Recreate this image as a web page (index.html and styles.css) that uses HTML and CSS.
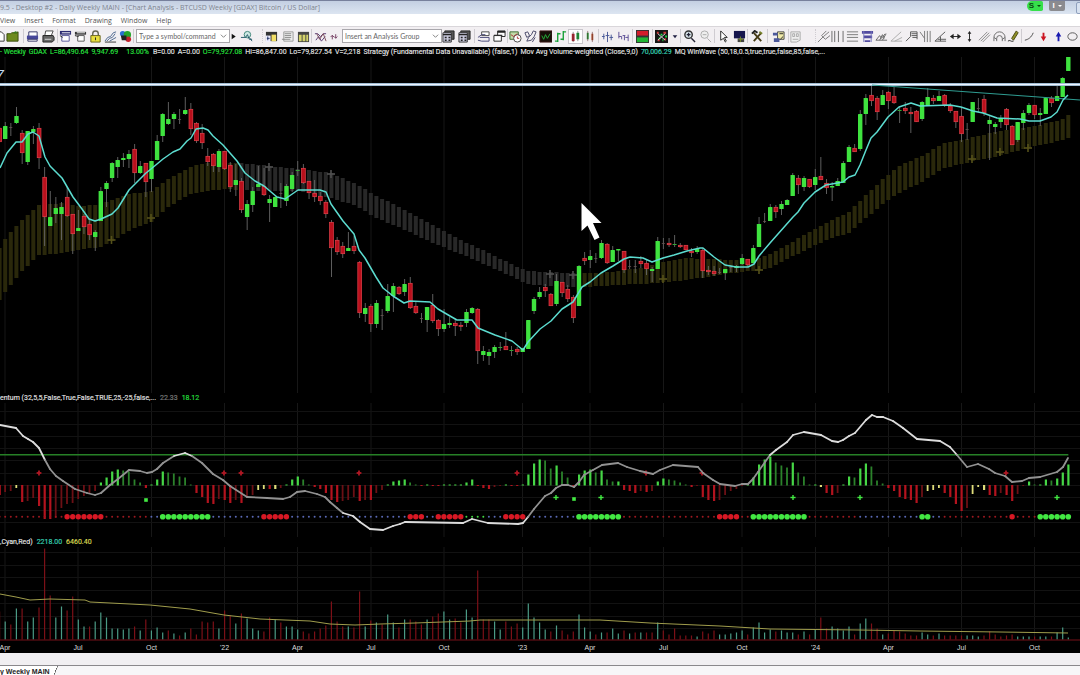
FILE: index.html
```html
<!DOCTYPE html>
<html lang="en">
<head>
<meta charset="utf-8">
<title>Desktop #2 - Daily Weekly MAIN</title>
<link rel="stylesheet" href="styles.css">
</head>
<body>
<div class="app">
  <header class="titlebar">
    <h1 class="title">9.5 - Desktop #2 - Daily Weekly MAIN - [Chart Analysis - BTCUSD Weekly [GDAX] Bitcoin / US Dollar]</h1>
    <div class="links">
      <button class="link link-symbol">S <i class="caret"></i></button>
      <button class="link link-interval">I <i class="caret"></i></button>
      <button class="link-edge" aria-label="Minimize"></button>
    </div>
  </header>
  <nav class="menu">
    <a href="#view">View</a><a href="#insert">Insert</a><a href="#format">Format</a><a href="#drawing">Drawing</a><a href="#window">Window</a><a href="#help">Help</a>
  </nav>
  <div class="toolbar" role="toolbar">
    <div class="group first" data-icons="doc folder"></div>
    <div class="group" data-icons="save print"></div>
    <div class="group" data-icons="win win2 lock wave colors"></div>
    <div class="group command">
      <input class="box" type="text" placeholder="Type a symbol/command" aria-label="Symbol or command">
      <svg class="drop" viewBox="0 0 8 8"><path d="M1 2.500l3 3 3-3" fill="none" stroke="#777"/></svg>
      <span class="icons" data-icons="play lookup"></span>
    </div>
    <div class="group dotted" data-icons="panel list book"></div>
    <div class="group analysis">
      <span class="icons" data-icons="zig updown"></span>
      <select class="box" aria-label="Analysis group"><option>Insert an Analysis Group</option></select>
      <svg class="drop" viewBox="0 0 8 8"><path d="M1 2.500l3 3 3-3" fill="none" stroke="#777"/></svg>
      <span class="icons" data-icons="tile tile"></span>
    </div>
    <div class="group" data-icons="hand stack"></div>
    <div class="group" data-icons="clock curve night ohlc candle candle2"></div>
    <div class="group" data-icons="bar1 bar2"></div>
    <div class="group" data-icons="redgreen"></div>
    <div class="group" data-icons="matrix small"></div>
    <div class="group" data-icons="zoomin zoomout"></div>
    <div class="group" data-icons="pointer screen"></div>
    <div class="group" data-icons="tools"></div>
    <div class="group" data-icons="flow"></div>
    <div class="group ghosted" data-icons="ghost"></div>
    <div class="group dotted" data-icons="fork vlines hlines fib fan angle steps vfan angle2 harrow varrow par arc pencil"></div>
    <div class="group" data-icons="curveline down up ellipse"></div>
  </div>
  <main class="charts">
    <p class="legend tight"><span class="g">- Weekly</span><span class="g">GDAX</span><span class="g">L=86,490.64</span><span class="g">9,947.69</span><span class="g change">13.00%</span><span>B=0.00</span><span>A=0.00</span><span class="g">O=79,927.08</span><span>Hi=86,847.00</span><span>Lo=79,827.54</span><span>V=2,218</span><span>Strategy (Fundamental Data Unavailable) (false,1)</span><span>Mov Avg Volume-weighted (Close,9,0)</span><span class="t">70,006.29</span><span>MQ WinWave (50,18,0.5,true,true,false,85,false,...</span></p>
    <svg id="price" class="plot" viewBox="0 57 1080 336" role="img" aria-label="Weekly price"></svg>
    <p class="legend"><span>entum (32,5,5,False,True,False,TRUE,25,-25,false,...</span><span class="dim">22.33</span><span class="g">18.12</span></p>
    <svg id="momentum" class="plot" viewBox="0 403 1080 134" role="img" aria-label="Momentum"></svg>
    <p class="legend"><span>,Cyan,Red)</span><span class="t">2218.00</span><span class="y">6460.40</span></p>
    <svg id="volume" class="plot" viewBox="0 547 1080 106" role="img" aria-label="Volume"></svg>
  </main>
  <footer class="tabs">
    <button class="tab">y Weekly MAIN</button>
  </footer>
</div>
<script src="chart.js"></script>
</body>
</html>
```
FILE: styles.css
```css
* { box-sizing: border-box; }
body { margin: 0; background: #f1eff2; font-family: "Open Sans", "Noto Sans", sans-serif; }
.app { min-height: 100vh; display: flex; flex-direction: column; overflow: hidden; }
button { border: 0; padding: 0; background: none; font: inherit; }

.titlebar { height: 14px; flex: none; display: flex; justify-content: space-between; border-top: 1px solid #77809c; background: linear-gradient(#c3cfe2, #dce5f1); }
.title { margin: 0; font: 400 7px/13px "Open Sans", "Noto Sans", sans-serif; color: #7d838e; white-space: nowrap; }
.links { display: flex; gap: 6px; align-items: flex-start; }
.link { width: 16px; height: 10px; display: flex; align-items: center; justify-content: center; gap: 3px; font: bold 8px/10px "Liberation Sans", sans-serif; border-radius: 0 0 2px 2px; }
.link-symbol { background: #36e04a; color: #0b4a12; border-radius: 6px 2px 2px 6px; }
.link-interval { background: #8b8b8f; color: #fff; }
.link-edge { width: 10px; height: 12px; margin: 1px -6px 0 5px; border: 1px solid #8fa0bd; border-radius: 2px; background: #d8e2f0; }
.caret { border: 2px solid transparent; border-top-color: currentColor; border-bottom: 0; }

.menu { height: 12px; flex: none; display: flex; gap: 9px; background: #fff; }
.menu a { font-size: 7px; line-height: 13px; color: #555; text-decoration: none; }

.toolbar { height: 21px; flex: none; display: grid; grid-template-columns: 23fr 34fr 76fr 129fr 49fr 163fr 33fr 91fr 34fr 20fr 28fr 34fr 33fr 20fr 21fr 27fr 206fr 59fr; background: #f2eff2; border-top: 1px solid #d9d6da; overflow: hidden; }
.group { min-width: 0; display: flex; align-items: center; justify-content: space-around; border-left: 1px solid #cfccd1; height: 14px; margin-top: 2px; }
.first { border-left: 0; justify-content: flex-end; padding-right: 4px; }
.dotted { border-left-style: dotted; }
.ghosted { justify-content: flex-start; }
.icons { display: flex; gap: 2px; flex: none; }
.tool { width: 13px; height: 13px; flex: none; display: block; }
.tool svg { display: block; width: 13px; height: 13px; }
.tool.on { background: #fff; outline: 1px solid #c9c6cc; }
.tool.tiny { width: 8px; }
.tool.tiny svg { width: 8px; }
.box { flex: 1 1 0; min-width: 0; height: 14px; border: 1px solid #a9a7ac; background: #fff; font: 7px/12px Lato, "Open Sans", sans-serif; color: #666; padding: 0 2px; border-radius: 0; appearance: none; }
.box::placeholder { color: #666; opacity: 1; }
.drop { width: 7px; height: 8px; flex: none; margin: 0 3px 0 -10px; }
.command { padding: 0 9px 0 2px; }
.analysis { padding: 0 3px 0 2px; }
.analysis .icons { gap: 3px; }
.analysis .box { margin-left: 4px; }
.command .icons { gap: 2px; }

.charts { background: #000; }
.legend { margin: 0; height: 10px; display: flex; gap: 4px; font: 7px/10px Roboto, "Liberation Sans", sans-serif; color: #ddd; white-space: nowrap; overflow: hidden; -webkit-text-stroke: 0.2px currentColor; }
.tight { gap: 3px; }
.change { margin: 0 1px 0 5px; }
.g { color: #24d93a; }
.t { color: #35c9ac; }
.y { color: #d0d04e; }
.dim { color: #777; }
.plot { display: block; width: 100%; height: auto; }
.plot text { font: 7px "Liberation Sans", Arial, sans-serif; fill: #ddd; text-anchor: middle; }
.plot .note { font: italic 14px "Liberation Sans", Arial, sans-serif; fill: #c4daf2; }

.tabs { flex: 1; min-height: 22px; padding-top: 13px; background: linear-gradient(#f1eff2 12px, #8a888c 12px, #8a888c 13px, #f7f6f8 13px); }
.tab { display: block; width: 58px; height: 10px; background: #fff linear-gradient(112deg, transparent 53px, #555 53px, #555 54px, transparent 54px); clip-path: polygon(0 0, 58px 0, 54px 100%, 0 100%); text-align: left; font: bold 7px/9px "Liberation Sans", Arial, sans-serif; color: #222; white-space: nowrap; }
```
FILE: chart.js
```js
const ICONS = {
  doc: '<path d="M3 2h6l3 3v7H3z" fill="#fff" stroke="#333"/>',
  folder: '<path d="M1 4h4l1-1h5l2-1v10H1z" fill="#6d8a1d" stroke="#384a0c"/><path d="M7 3l4-2 1 3z" fill="#3c7a1c"/>',
  save: '<path d="M3 2h9v5H3z" fill="#fff" stroke="#336"/><path d="M1 6h12v4H1z" fill="#47479a"/><path d="M2 10h10v2H2z" fill="#fff" stroke="#336"/>',
  print: '<path d="M4 1h8l-2 5H3z" fill="#fff" stroke="#444"/><path d="M1 6h11l1 2v3l-2 2H1z" fill="#666" stroke="#222"/><path d="M3 10h7" stroke="#ddd"/>',
  win: '<path d="M1 1h12v4H1z" fill="#2a2a72"/><path d="M3 3h9" stroke="#fff"/><path d="M3 6h8v6H3z" fill="#fff" stroke="#559"/><path d="M1 6l3 2" stroke="#222"/>',
  win2: '<path d="M1 2h12v3H1z" fill="#333"/><path d="M3 3h9" stroke="#fff"/><path d="M4 6h7v6H4z" fill="#fff" stroke="#555"/><path d="M1 6l4 1" stroke="#222"/>',
  lock: '<path d="M4 6V4a3 3 0 016 0v2" fill="none" stroke="#665" stroke-width="1.500"/><path d="M2 6h10v7H2z" fill="#e8df3d" stroke="#66601a"/><path d="M7 8v3" stroke="#222"/>',
  wave: '<path d="M1 12l3-4 3-1 3-4 3-1M3 12l3-3 3-1 3-4M6 12l7-4" fill="none" stroke="#47638d"/><path d="M1 13h12" stroke="#333"/>',
  colors: '<circle cx="4" cy="4" r="3" fill="#2a6fd0"/><circle cx="9" cy="5" r="4" fill="#25a52c"/><circle cx="10" cy="10" r="3" fill="#c3202b"/><path d="M2 6h6v5H3z" fill="#222"/>',
  play: '<path d="M3 2l7 5-7 5z" fill="#111"/>',
  lookup: '<circle cx="8" cy="5" r="3.500" fill="#cfe9e4" stroke="#3a8276"/><path d="M1 8h5l2-3 2 5h3M10 8l3 4" fill="none" stroke="#256"/>',
  panel: '<path d="M1 2h12v10H1z" fill="#333"/><path d="M7 5h5v7H7z" fill="#f2df67"/><path d="M1 6h5v7H1z" fill="#eef"/><path d="M2 9h3M3 7v4" stroke="#236"/>',
  list: '<path d="M3 2h10v10H3z" fill="#eee" stroke="#999"/><path d="M4 4h7M4 6h7M4 8h7M1 10h9" stroke="#888"/>',
  book: '<path d="M1 2h12v11H1z" fill="#444"/><path d="M2 5h3v7H2zM6 5h3v7H6zM10 5h2v7h-2z" fill="#d4d36a"/>',
  zig: '<path d="M1 4h3l3 3 3-3h3M2 11l3-4 3 5 4-5" fill="none" stroke="#55356e"/><path d="M3 4l3 6 4-6 3 8" fill="none" stroke="#7a4a58"/>',
  updown: '<path d="M4 12V5M1 8l3-3 3 3M10 3v7M7 7l3 3 3-3" fill="none" stroke="#6a2f55" stroke-width="1.500"/>',
  tile: '<path d="M3 1h10v9H3z" fill="#555" stroke="#222"/><path d="M1 3h9v10H1z" fill="#c9c9dc" stroke="#333"/><path d="M1 5h9M3 8h2M7 8h2M3 11h2M7 11h2" stroke="#222" stroke-width="1.500"/>',
  hand: '<path d="M5 2h8v4H5z" fill="#fff" stroke="#444"/><path d="M1 8l4-3h4M1 11l4 1h8M3 8h10v4" fill="none" stroke="#447"/>',
  stack: '<path d="M5 1h8v6H5z" fill="#fff" stroke="#222"/><path d="M5 2h8M1 6h9" stroke="#222" stroke-width="2"/><path d="M1 6h8v6H1z" fill="#fff" stroke="#222"/>',
  clock: '<path d="M1 2h9v8H1z" fill="#c3dba9" stroke="#396b2f"/><circle cx="9" cy="9" r="4" fill="#fff" stroke="#444"/><path d="M9 7v2h2M2 5l3 2 4-3" stroke="#a33" fill="none"/>',
  curve: '<path d="M1 3l3-1 2 4-3 2zM3 12l2-4 3-3 2-4 3 1-2 5-3 4z" fill="none" stroke="#446"/><path d="M9 13l3-5" stroke="#446"/>',
  night: '<path d="M1 1h13v12H1z" fill="#160f08" stroke="#3d1718"/><path d="M3 6l2 4 2-5 2 4 3-5" fill="none" stroke="#26b23a"/>',
  ohlc: '<path d="M4 3v10M1 12h3M4 4h3M10 1v10M7 10h3M10 2h3" fill="none" stroke="#1aa13a" stroke-width="1.500"/>',
  candle: '<path d="M3 4h3v8H3z" fill="#b21f2b"/><path d="M8 3h3v7H8z" fill="#189a34"/><path d="M4.500 2v11M9.500 1v11" stroke="#444" stroke-width=".6"/>',
  candle2: '<path d="M3 3h2v7H3z" fill="#189a34"/><path d="M8 4h2v7H8z" fill="#b2502b"/><path d="M4 1v11M9 2v11" stroke="#633" stroke-width=".6"/>',
  bar1: '<path d="M3 4v6M1 7h3M7 2v11M5 6h4M11 5v6M9 8h4" stroke="#435394"/>',
  bar2: '<path d="M2 2v7M2 7h3v3M8 6v5M6 6h3M12 5v7M9 8h3" fill="none" stroke="#5a4b94"/>',
  redgreen: '<path d="M0 0h14v14H0z" fill="#333"/><path d="M1 1h12v5H1z" fill="#d21d2b"/><path d="M1 8h12v5H1z" fill="#21b534"/>',
  matrix: '<path d="M0 0h14v14H0z" fill="#161616"/><path d="M2 3h2M9 3h3M3 11h2M10 10h2" stroke="#c33" stroke-width="2"/><path d="M4 9h2M6 5h2M11 7h2M8 11h1" stroke="#2d4" stroke-width="2"/><path d="M3 4l8 7M11 4l-8 7" stroke="#ddd"/>',
  small: '<path d="M3 5h8l-4 5z" fill="#224"/>',
  zoomin: '<circle cx="6" cy="5" r="4" fill="#dde8ee" stroke="#333" stroke-width="1.500"/><path d="M4 5h4M6 3v4M9 9l4 4" stroke="#223" stroke-width="1.500"/>',
  zoomout: '<circle cx="6" cy="5" r="4" fill="#eee" stroke="#aaa"/><path d="M4 5h4M9 9l4 4" stroke="#aaa"/>',
  pointer: '<path d="M4 1v10l3-2 2 4 1-1-2-4h3z" fill="#fff" stroke="#222"/>',
  screen: '<path d="M1 1h12v8H1z" fill="#16164d"/><path d="M5 9h7v4H5z" fill="#444"/><path d="M8 7v6M6 10h5" stroke="#7a8c2a"/>',
  tools: '<path d="M3 3l8 9M11 3l-8 9" stroke="#453b14" stroke-width="2"/><path d="M1 4l3-3 3 2" fill="none" stroke="#222" stroke-width="2"/><path d="M9 2l3 2" stroke="#76812a" stroke-width="2"/>',
  flow: '<path d="M6 2h7v8H6z" fill="#f0eaa9" stroke="#444"/><path d="M1 3h5v3H1zM2 9h6v4H2z" fill="#4b589b"/><path d="M8 4h4M9 10l3-3" stroke="#222"/>',
  ghost: '<path d="M2 2h10v9l-4 2H2z" fill="#eee" stroke="#aaa"/><path d="M4 4h2v3H4zM8 4h2v3H8zM4 10h6" fill="none" stroke="#aaa"/>',
  fork: '<path d="M1 13l6-6M5 6l4 4M5 6l5-5M7 7l6-5M9 10l5-4" stroke="#777" fill="none"/>',
  vlines: '<path d="M1 1v12M4 1v12M8 1v12M13 1v12" stroke="#666"/>',
  hlines: '<path d="M1 2h12M1 5h12M1 8h12M1 12h12" stroke="#777"/>',
  fib: '<path d="M1 1h12v3H1zM3 6h9v3H3zM4 11h6v2H4z" fill="#514aa0"/><path d="M3 1v12M11 1v12" stroke="#77b"/>',
  fan: '<path d="M1 11h12M1 11l4-5 2 3 4-5M5 11l3-6 2 4M8 11l4-7" fill="none" stroke="#666"/>',
  angle: '<path d="M1 12h12M1 12L12 2M5 12l8-4" fill="none" stroke="#aaa"/>',
  steps: '<path d="M1 12l5-5V2h7v8M7 4h6M7 6h6M8 8h5" fill="none" stroke="#555"/>',
  vfan: '<path d="M1 2l5 7M6 1v12M9 1v12M12 1v12" stroke="#777"/>',
  angle2: '<path d="M1 12h12M1 12L12 2M4 10h9M7 7v5" fill="none" stroke="#555"/>',
  harrow: '<path d="M2 7h10" stroke="#222"/><path d="M5 4L1 7l4 3zM9 4l4 3-4 3z" fill="#222"/>',
  varrow: '<path d="M7 3v8" stroke="#222"/><path d="M5 4l2-3 2 3zM5 10l2 3 2-3z" fill="#222"/>',
  par: '<path d="M1 11l9-9M3 12l9-9M5 13l8-8" stroke="#888"/>',
  arc: '<path d="M1 12V8a6 6 0 0112 0v4M4 12V9a3 3 0 016 0v3M1 8l3 2M13 8l-3 2" fill="none" stroke="#666"/>',
  pencil: '<path d="M5 9l5-8 2 2-5 8z" fill="#90902a" stroke="#454510"/><path d="M1 12c2-2 3 1 6 0" fill="none" stroke="#222"/>',
  curveline: '<path d="M2 11C6 10 9 8 11 3" fill="none" stroke="#444"/>',
  down: '<path d="M6 3h2v4h2l-3 5-3-5h2z" fill="#cb1421"/>',
  up: '<path d="M6 12h2V7h2L7 2 4 7h2z" fill="#1a1ab0"/>',
  ellipse: '<ellipse cx="7" cy="7" rx="5" ry="4" fill="none" stroke="#555"/>'
};
document.querySelectorAll('[data-icons]').forEach(group => {
  group.innerHTML = group.dataset.icons.split(' ').map(n =>
    `<button class="tool${n === 'candle' ? ' on' : ''}${n === 'play' || n === 'small' || n === 'updown' ? ' tiny' : ''}" aria-label="${n}"><svg viewBox="0 0 14 14">${ICONS[n]}</svg></button>`).join('');
});

const X = i => 5.2 + 5.625 * i;
const FIRST = -1;
const rect = (x, y, w, h, f, extra = '') => `<rect x="${x.toFixed(1)}" y="${y}" width="${w}" height="${h}" fill="${f}"${extra}/>`;
const poly = (pts, color, w) => `<polyline points="${pts}" fill="none" stroke="${color}" stroke-width="${w}" stroke-linejoin="round"/>`;
const seg = (x1, y1, x2, y2, c, w = 1) => `<path d="M${x1} ${y1}L${x2} ${y2}" stroke="${c}" stroke-width="${w}"/>`;
const MONTHS = [[5, 'Apr'], [78, 'Jul'], [151.5, 'Oct'], [224.5, "'22"], [297.5, 'Apr'], [371, 'Jul'], [444, 'Oct'], [522.5, "'23"], [590, 'Apr'], [663.5, 'Jul'], [742, 'Oct'], [815.5, "'24"], [888.5, 'Apr'], [961.5, 'Jul'], [1034.5, 'Oct']];
const months = (a, b) => MONTHS.map(m => seg(m[0], a, m[0], b, '#171717')).join('');
const rows = ys => ys.map(y => seg(0, y, 1080, y, '#121212')).join('');
const plus = (x, y, r, c, w) => seg(x - r, y, x + r, y, c, w) + seg(x, y - r, x, y + r, c, w);

// One entry per week: colour, body top, body bottom, high, low
const CANDLES = `r128,142,127,142 g126,139,122,139 d127,128,123,136 g116,123,107,124 r133,153,130,164 g131,162,131,165 g129,132,126,144 r128,158,123,169 r177,217,167,246 g217,226,191,226
g208,214,197,223 g207,214,202,240 r197,216,187,217 r214,234,214,254 g228,231,210,231 r216,227,214,234 r224,235,218,240 g232,237,230,251 g191,221,187,221 g183,189,181,207
g163,178,162,182 g160,167,157,178 g158,160,153,167 g154,159,150,168 r149,173,144,183 g166,173,161,174 r163,182,163,197 g161,179,161,192 g141,160,135,160 g114,136,113,142
g119,124,102,125 g114,119,112,129 d119,119,109,124 g110,114,97,115 r109,129,103,135 r123,141,122,143 r133,143,124,149 r156,162,148,166 r154,166,153,172 g151,167,149,172
r151,169,151,170 r165,187,162,192 g180,185,164,196 r181,210,178,213 g204,217,200,230 g191,205,187,212 g184,187,166,187 r186,195,168,196 g199,203,195,222 g197,207,196,207
d193,193,183,208 g186,201,184,206 g175,189,172,192 e170,171,161,176 r168,183,164,184 r181,193,181,199 r193,197,180,202 r196,201,192,205 r202,214,200,218 r222,248,220,277
r240,252,237,255 r246,254,242,258 g248,251,232,251 r246,251,236,254 r262,313,261,318 g308,314,303,322 r306,324,304,332 g303,324,300,328 d315,315,309,330 g296,311,284,313
g286,296,283,312 r287,294,286,295 g284,292,279,296 r283,308,277,309 r306,313,302,314 d318,318,313,323 g307,320,307,332 r305,321,294,323 r320,329,319,336 g324,329,309,332
g323,325,317,328 r323,326,319,336 r325,326,322,331 g312,323,309,327 g308,313,307,314 r309,351,308,364 g351,355,346,361 g352,356,349,365 g347,352,345,358 e347,348,342,351
r346,350,332,350 e350,351,346,356 r349,352,347,355 g348,352,348,352 g320,349,320,349 g299,311,297,314 g292,297,287,299 r287,291,284,297 r294,306,293,306 g281,304,274,306
r282,293,282,297 r289,299,285,302 r297,318,295,323 g266,306,265,306 r258,261,252,265 g256,260,250,268 d258,258,253,263 g243,258,240,259 r244,263,243,264 g250,262,246,262
g249,250,249,261 r251,270,251,273 d266,266,260,269 d266,266,260,273 r261,264,256,268 r263,269,260,275 g269,271,267,282 g241,269,237,269 d243,243,238,249 r243,245,238,247
e244,245,235,247 r245,247,243,248 r245,250,245,250 r251,253,248,257 g249,252,246,254 r250,271,248,278 r270,272,266,275 r271,274,266,276 d272,272,268,274 g269,273,269,280
d267,267,265,272 g266,268,265,272 g258,264,254,265 r259,265,259,267 g248,263,245,263 g224,247,217,247 d221,221,213,223 g207,221,204,221 r207,212,205,218 g204,209,201,215
g200,205,199,205 g175,196,173,196 r178,185,175,194 g178,187,176,191 r179,187,179,188 g177,185,169,190 r176,180,157,180 r183,188,179,194 g186,187,182,201 g181,186,178,186
g163,183,161,183 g147,162,145,162 r148,152,144,152 g114,149,110,151 g98,114,94,125 r95,101,85,106 r98,112,96,120 g95,105,90,105 r92,101,91,109 r96,103,87,104
e110,111,106,123 r108,111,102,114 r112,114,107,133 r111,122,110,122 g102,119,101,121 g97,105,88,106 r98,101,95,104 g96,101,91,101 r95,105,94,107 r106,111,103,113
r111,122,111,128 r116,134,107,142 d129,129,123,140 g102,122,102,122 d108,108,98,112 r99,113,95,116 g120,124,115,160 g124,127,122,134 g118,122,115,128 r109,125,108,130
r126,145,125,145 g122,140,122,142 g113,123,110,130 g105,113,103,115 r105,115,105,119 g113,115,108,126 g98,114,98,114 r98,103,96,107 g96,101,86,101 g78,97,77,97 g56,71,56,71`.split(/\s+/);

// Wave band keys: x, upper edge, lower edge
const BAND = [[0, 248, 300], [5, 239, 292], [22, 220, 271], [39, 205, 255], [62, 203, 253], [78, 206, 250], [100, 205, 247], [117, 198, 238], [133, 193, 228], [150, 192, 223], [167, 180, 208], [190, 167, 194], [207, 163, 191], [230, 163, 189], [253, 164, 191], [297, 169, 191], [331, 173, 198], [354, 183, 205], [377, 196, 218], [405, 210, 230], [433, 225, 243], [461, 240, 254], [489, 253, 266], [517, 267, 279], [528, 271, 284], [545, 272, 286], [573, 273, 287], [590, 273, 287], [613, 272, 285], [646, 267, 284], [667, 261, 282], [687, 258, 280], [707, 259, 277], [733, 260, 273], [759, 258, 270], [770, 254, 268], [787, 245, 259], [804, 235, 251], [826, 223, 240], [849, 212, 233], [866, 195, 218], [883, 179, 204], [899, 166, 193], [922, 156, 182], [944, 143, 168], [961, 140, 164], [978, 136, 160], [995, 132, 157], [1017, 129, 151], [1040, 125, 145], [1063, 119, 140], [1069, 115, 138]];
const bandAt = x => {
  let k = 1;
  while (k < BAND.length - 1 && BAND[k][0] < x) k++;
  const a = BAND[k - 1], b = BAND[k], t = Math.min(1, Math.max(0, (x - a[0]) / (b[0] - a[0])));
  return [Math.round(a[1] + (b[1] - a[1]) * t), Math.round(a[2] + (b[2] - a[2]) * t)];
};

const AVERAGE = '0,168 7,153 16,142 22,142 28,134 33,132 39,136 45,157 50,166 62,178 73,197 82,209 89,219 95,221 101,219 112,214 118,208 129,190 146,173 151,169 163,159 173,152 180,149 187,141 191,138 196,129 203,128 208,130 213,136 223,145 237,161 245,173 255,181 264,186 277,197 285,199 298,190 320,190 326,192 331,204 343,221 354,234 359,250 365,258 376,277 383,288 393,296 404,303 410,301 430,302 438,309 450,316 457,320 472,320 478,328 495,335 512,341 523,350 528,342 540,329 551,321 562,309 573,302 582,287 590,282 601,273 613,266 624,259 630,257 643,258 652,262 663,258 674,255 687,251 700,248 703,248 714,257 725,265 736,267 748,267 754,264 759,256 770,243 793,217 798,212 804,203 815,192 826,185 843,182 849,177 855,175 860,165 866,150 871,138 877,132 888,117 899,107 911,103 920,106 950,105 961,107 973,111 983,113 997,118 1020,119 1029,121 1040,121 1051,117 1057,112 1063,100 1068,95';

let s = months(57, 393);
CANDLES.forEach((_, k) => {
  const i = k + FIRST, [a, b] = bandAt(X(i));
  s += rect(X(i) - 2, a, 4, b - a, i > 41 && i < 102 ? '#282828' : '#2a280b');
});
s += [[111.5, 240], [151, 218], [663, 279], [759, 270], [972, 159], [1000, 152], [1028, 148]].map(p => plus(p[0], p[1], 4, '#55511a', 1.6)).join('');
s += [[269, 167], [331, 174], [550, 274], [573, 275]].map(p => plus(p[0], p[1], 4, '#505050', 1.6)).join('');
CANDLES.forEach((c, k) => {
  const x = X(k + FIRST), [t, b, h, l] = c.slice(1).split(',').map(Number);
  const kind = c[0];
  s += rect(x - .4, h, .9, l - h, '#686868');
  if (kind === 'r') s += rect(x - 1.8, t + .3, 3.8, Math.max(1, b - t - .6), '#b9101c', ' stroke="#e5404a" stroke-width=".7"');
  if (kind === 'g') s += rect(x - 2.2, t, 4.4, Math.max(1.5, b - t), '#3fe33f', ' rx=".6"');
  if (kind === 'd') s += rect(x - 1.5, t, 3, .8, '#6b5555');
  if (kind === 'e') s += rect(x - 2, t, 4, 1, '#35a535');
});
s += seg(0, 84.5, 1080, 84.5, '#86abc4', 3) + seg(0, 84.5, 1080, 84.5, '#eef4ff', 1.4);
s += seg(872, 85, 1080, 100, '#2f9d92', 1);
s += poly(AVERAGE, '#5cdcd0', 1.5);
s += '<text class="note" x="0" y="80">7</text>';
s += '<path d="M581.500 203v28l6-5.500 7 14.500 5-2.500-6.500-14.500h8.500z" fill="#fff"/>';
document.getElementById('price').innerHTML = s;

const HIST = [-10, -7, -6, -3, -17, -16, -13, -21, -34, -34, -33, -23, -19, -18, -14, -11, -9, -6, 3, 8, 14, 16, 15, 14, 6, 3, -3, 1, 6, 14, 13, 12, 9, 8, 1, -8, -12, -18, -19, -14, -15, -18, -15, -18, -12, -10, -5, -4, -4, -4, -3, 1, 6, 9, 6, 1, -2, -4, -8, -15, -17, -16, -15, -12, -16, -15, -15, -8, -5, 1, 4, 5, 6, 3, 1, -1, 1, -1, -1, 1, 1, 1, 1, 3, 6, -1, -3, -4, -2, -1, 1, -1, -1, 1, 11, 22, 26, 25, 17, 20, 14, 8, -1, 11, 15, 16, 13, 15, 6, 4, 4, -5, -6, -8, -6, -7, -6, 4, 7, 6, 5, 3, 1, -2, -1, -12, -15, -16, -15, -10, -6, -4, -1, 1, 8, 21, 26, 29, 23, 20, 18, 23, 13, 9, 1, 1, -2, -8, -10, -8, 1, 9, 8, 17, 22, 19, 5, 2, -3, -6, -12, -14, -15, -18, -12, -6, -5, -3, -8, -12, -19, -26, -23, -9, -2, -5, -10, -11, -8, -10, -16, -9, -1, 4, 1, 1, 6, 5, 7, 13, 21];
const YELLOW = [2, 45, 46, 48, 145, 164, 165, 166, 172, 173, 174];
const RUNS = 'r12R7r8b2G9b9R5b21R3b2R5g4b3R4b9G8r17R4r2G10r9b11G2b2r12R1r4G6';
const MOM = [[0, 425], [16, 428], [23, 436], [28, 439], [33, 442], [39, 448], [45, 460], [50, 469], [56, 476], [63, 481], [75, 489], [87, 493], [95, 495], [101, 493], [110, 485], [118, 479], [129, 470], [140, 471], [147, 473], [152, 472], [157, 469], [163, 463], [174, 456], [185, 453], [192, 456], [202, 463], [213, 474], [223, 480], [230, 486], [247, 497], [267, 498], [283, 499], [290, 497], [297, 492], [305, 491], [317, 494], [325, 497], [330, 502], [337, 508], [343, 513], [353, 516], [360, 522], [370, 529], [383, 530], [393, 526], [400, 524], [405, 522], [463, 523], [472, 519], [488, 523], [518, 524], [523, 523], [528, 517], [534, 509], [545, 496], [551, 493], [556, 488], [562, 485], [568, 485], [574, 487], [579, 482], [584, 475], [593, 470], [602, 465], [618, 463], [627, 467], [640, 471], [653, 474], [660, 470], [673, 465], [698, 467], [703, 473], [713, 480], [720, 484], [735, 486], [742, 484], [748, 484], [753, 479], [758, 472], [770, 455], [776, 450], [787, 442], [793, 435], [804, 432], [821, 435], [832, 441], [838, 442], [843, 440], [849, 436], [855, 433], [866, 420], [872, 415], [877, 417], [883, 417], [893, 421], [903, 428], [917, 439], [940, 441], [950, 447], [957, 455], [967, 467], [978, 464], [989, 469], [995, 473], [1005, 476], [1012, 482], [1022, 481], [1029, 478], [1040, 477], [1057, 472], [1063, 467], [1068, 458]];

s = months(403, 537) + rows([411.5, 424.5, 436.5, 448.5, 460.5, 473.5, 485.5, 497.5, 510.5, 522.5]);
s += seg(0, 454.7, X(189), 454.7, '#268026', 1.5);
HIST.forEach((v, k) => {
  const i = k + FIRST, strong = Math.abs(v) >= Math.abs(HIST[k - 1] || 0) || v * HIST[k - 1] < 0;
  const color = YELLOW.includes(i) ? '#dfdc7a' : v > 0 ? (strong ? '#46d746' : '#2b822b') : (strong ? '#b3131e' : '#6c1015');
  const h = Math.max(1, Math.abs(v));
  s += rect(X(i) - 1, v > 0 ? 485.500 - h : 485, strong ? 2.2 : 1.800, h, color);
});
let i = FIRST;
for (const [, t, n] of RUNS.matchAll(/([a-zA-Z])(\d+)/g)) {
  for (let k = 0; k < n; k++, i++) {
    const x = X(i).toFixed(1);
    if (t === 'R') s += `<circle cx="${x}" cy="516.700" r="2.700" fill="#d81824"/>`;
    else if (t === 'G') s += `<circle cx="${x}" cy="516.700" r="2.800" fill="#42e842"/>`;
    else s += `<circle cx="${x}" cy="516.700" r="1" fill="${{ r: '#9c1820', b: '#5a68b4', g: '#42d842' }[t]}"/>`;
  }
}
s += [39, 224, 241, 359, 517, 646, 702, 1006].map(x => plus(x, 473, 2.4, '#b01824', 1.8)).join('');
s += [[146, 500], [574, 499]].map(p => rect(p[0] - 1.8, p[1] - 1.8, 3.6, 3.6, '#42e842')).join('');
s += [556, 601, 793, 860, 1057].map(x => plus(x, 497.5, 2.6, '#42e842', 1.4)).join('');
for (let k = 1; k < MOM.length; k++) {
  const y = (MOM[k - 1][1] + MOM[k][1]) / 2;
  s += `<path d="M${MOM[k - 1]}L${MOM[k]}" stroke="${y < 456 || y > 514 ? '#dcdcdc' : '#929292'}" stroke-width="1.800" stroke-linecap="round"/>`;
}
document.getElementById('momentum').innerHTML = s;

const VOLUME = 'r28 t18 r15 t31 r31 t18 t22 r32 r91 r44 t22 t33 r29 r43 t20 t13 r13 t18 t27 t22 t11 t11 t10 t11 r13 t9 r20 t9 t12 t7 r9 t6 r4 t7 r11 r5 r18 r17 r18 t11 r29 r24 t16 r26 t21 t11 t9 r8 r22 t20 r17 t13 t13 t10 r8 r6 r8 r11 r14 r38 r18 r13 t13 r12 r48 t13 r19 t17 r15 t25 t17 r12 t20 r20 r18 r15 t20 r23 r26 t28 t20 r21 r17 t30 t22 r69 r20 r20 t18 t10 r18 r13 r16 t12 t36 t22 t17 t10 r8 t14 r9 r5 r8 t25 t12 t8 r5 t7 r7 t11 t6 r9 t6 r7 t7 r7 r7 t17 r9 r5 r11 r4 r4 r4 t3 r8 r6 r9 t5 t5 t6 t7 t9 r5 t12 t17 t7 t10 r8 t9 t7 t7 r5 t8 r5 t10 r22 r11 t13 t11 t9 t13 r5 t16 t21 r16 r11 t5 r6 r9 r8 r6 r4 r4 t7 t5 r4 t6 r4 r4 r4 r4 t4 t4 t3 r4 r8 r5 r3 r4 r5 t3 t3 t3 r3 t3 t3 r3 t7 t12 t2'.split(' ');
s = months(547, 640) + rows([552.5, 565.5, 577.5, 590.5, 603.5, 616.5, 628.5]);
VOLUME.forEach((v, k) => {
  const h = +v.slice(1);
  s += rect(X(k + FIRST) - .6, 639.5 - h, 1.2, h, v[0] === 't' ? '#4b9b86' : '#7c1017');
});
s += seg(0, 640, 1080, 640, '#761018', 1);
s += poly('0,594 16,597 30,600 50,599 85,600 90,602 150,605 190,609 224,615 260,619 310,621 330,624 355,625 380,624 415,623 470,621 480,620 600,620 650,623 720,626 770,629 860,630 920,631 1000,632 1068,633', '#a09d4c', 1);
s += MONTHS.map(m => `<text x="${m[0]}" y="650">${m[1]}</text>`).join('');
document.getElementById('volume').innerHTML = s;
```
